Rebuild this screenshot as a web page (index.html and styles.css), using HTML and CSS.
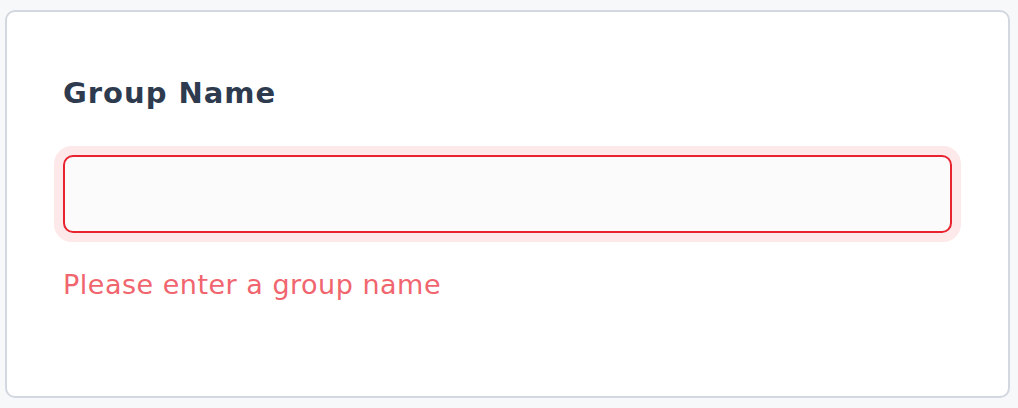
FILE: index.html
```html
<!DOCTYPE html>
<html>
<head>
<meta charset="UTF-8">
<title>Group Name</title>
<link rel="stylesheet" href="styles.css">
</head>
<body>
<div class="card">
    <label class="label" for="group">Group Name</label>
    <div class="field">
        <input type="text" id="group" class="input">
    </div>
    <p class="error">Please enter a group name</p>
</div>
</body>
</html>
```

FILE: styles.css
```css
body{
    margin: 0;
    background: #f7f8fa;
    font-family: "DejaVu Sans", Inter, sans-serif;
}
.card{
    margin: 10px 8px 10px 5px;
    height: 388px;
    box-sizing: border-box;
    background: #fff;
    border: 2px solid #d3d7e0;
    border-radius: 10px;
    padding: 64px 56px 0 56px;
    display: flex;
    flex-direction: column;
}
.label{
    font-size: 29px;
    font-weight: 700;
    letter-spacing: 1px;
    color: #2e3b4f;
    line-height: 34px;
}
.field{
    margin-top: 36px;
    padding: 9px;
    margin-left: -9px;
    margin-right: -9px;
    background: #fde8ea;
    border-radius: 18px;
}
.input{
    display: block;
    width: 100%;
    box-sizing: border-box;
    height: 78px;
    border: 2px solid #e8222e;
    border-radius: 10px;
    background: #fbfbfb;
    outline: none;
}
.error{
    margin: 25px 0 0;
    font-size: 27px;
    letter-spacing: 0.5px;
    color: #f0656e;
    line-height: 36px;
}
```
